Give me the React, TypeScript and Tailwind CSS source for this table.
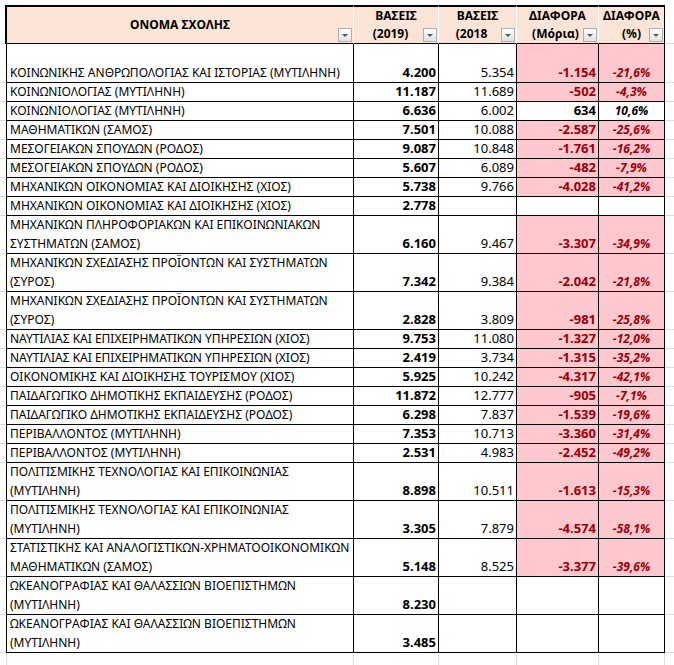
import React from "react";

type Row = {
  name: string[];
  h: "tall" | "one" | "two";
  b19: string;
  b18: string;
  diff: string;
  pct: string;
};

const rows: Row[] = [
  { name: ["ΚΟΙΝΩΝΙΚΗΣ ΑΝΘΡΩΠΟΛΟΓΙΑΣ ΚΑΙ ΙΣΤΟΡΙΑΣ (ΜΥΤΙΛΗΝΗ)"], h: "tall", b19: "4.200", b18: "5.354", diff: "-1.154", pct: "-21,6%" },
  { name: ["ΚΟΙΝΩΝΙΟΛΟΓΙΑΣ (ΜΥΤΙΛΗΝΗ)"], h: "one", b19: "11.187", b18: "11.689", diff: "-502", pct: "-4,3%" },
  { name: ["ΚΟΙΝΩΝΙΟΛΟΓΙΑΣ (ΜΥΤΙΛΗΝΗ)"], h: "one", b19: "6.636", b18: "6.002", diff: "634", pct: "10,6%" },
  { name: ["ΜΑΘΗΜΑΤΙΚΩΝ (ΣΑΜΟΣ)"], h: "one", b19: "7.501", b18: "10.088", diff: "-2.587", pct: "-25,6%" },
  { name: ["ΜΕΣΟΓΕΙΑΚΩΝ ΣΠΟΥΔΩΝ (ΡΟΔΟΣ)"], h: "one", b19: "9.087", b18: "10.848", diff: "-1.761", pct: "-16,2%" },
  { name: ["ΜΕΣΟΓΕΙΑΚΩΝ ΣΠΟΥΔΩΝ (ΡΟΔΟΣ)"], h: "one", b19: "5.607", b18: "6.089", diff: "-482", pct: "-7,9%" },
  { name: ["ΜΗΧΑΝΙΚΩΝ ΟΙΚΟΝΟΜΙΑΣ ΚΑΙ ΔΙΟΙΚΗΣΗΣ (ΧΙΟΣ)"], h: "one", b19: "5.738", b18: "9.766", diff: "-4.028", pct: "-41,2%" },
  { name: ["ΜΗΧΑΝΙΚΩΝ ΟΙΚΟΝΟΜΙΑΣ ΚΑΙ ΔΙΟΙΚΗΣΗΣ (ΧΙΟΣ)"], h: "one", b19: "2.778", b18: "", diff: "", pct: "" },
  { name: ["ΜΗΧΑΝΙΚΩΝ ΠΛΗΡΟΦΟΡΙΑΚΩΝ ΚΑΙ ΕΠΙΚΟΙΝΩΝΙΑΚΩΝ", "ΣΥΣΤΗΜΑΤΩΝ (ΣΑΜΟΣ)"], h: "two", b19: "6.160", b18: "9.467", diff: "-3.307", pct: "-34,9%" },
  { name: ["ΜΗΧΑΝΙΚΩΝ ΣΧΕΔΙΑΣΗΣ ΠΡΟΪΟΝΤΩΝ ΚΑΙ ΣΥΣΤΗΜΑΤΩΝ", "(ΣΥΡΟΣ)"], h: "two", b19: "7.342", b18: "9.384", diff: "-2.042", pct: "-21,8%" },
  { name: ["ΜΗΧΑΝΙΚΩΝ ΣΧΕΔΙΑΣΗΣ ΠΡΟΪΟΝΤΩΝ ΚΑΙ ΣΥΣΤΗΜΑΤΩΝ", "(ΣΥΡΟΣ)"], h: "two", b19: "2.828", b18: "3.809", diff: "-981", pct: "-25,8%" },
  { name: ["ΝΑΥΤΙΛΙΑΣ ΚΑΙ ΕΠΙΧΕΙΡΗΜΑΤΙΚΩΝ ΥΠΗΡΕΣΙΩΝ (ΧΙΟΣ)"], h: "one", b19: "9.753", b18: "11.080", diff: "-1.327", pct: "-12,0%" },
  { name: ["ΝΑΥΤΙΛΙΑΣ ΚΑΙ ΕΠΙΧΕΙΡΗΜΑΤΙΚΩΝ ΥΠΗΡΕΣΙΩΝ (ΧΙΟΣ)"], h: "one", b19: "2.419", b18: "3.734", diff: "-1.315", pct: "-35,2%" },
  { name: ["ΟΙΚΟΝΟΜΙΚΗΣ ΚΑΙ ΔΙΟΙΚΗΣΗΣ ΤΟΥΡΙΣΜΟΥ (ΧΙΟΣ)"], h: "one", b19: "5.925", b18: "10.242", diff: "-4.317", pct: "-42,1%" },
  { name: ["ΠΑΙΔΑΓΩΓΙΚΟ ΔΗΜΟΤΙΚΗΣ ΕΚΠΑΙΔΕΥΣΗΣ (ΡΟΔΟΣ)"], h: "one", b19: "11.872", b18: "12.777", diff: "-905", pct: "-7,1%" },
  { name: ["ΠΑΙΔΑΓΩΓΙΚΟ ΔΗΜΟΤΙΚΗΣ ΕΚΠΑΙΔΕΥΣΗΣ (ΡΟΔΟΣ)"], h: "one", b19: "6.298", b18: "7.837", diff: "-1.539", pct: "-19,6%" },
  { name: ["ΠΕΡΙΒΑΛΛΟΝΤΟΣ (ΜΥΤΙΛΗΝΗ)"], h: "one", b19: "7.353", b18: "10.713", diff: "-3.360", pct: "-31,4%" },
  { name: ["ΠΕΡΙΒΑΛΛΟΝΤΟΣ (ΜΥΤΙΛΗΝΗ)"], h: "one", b19: "2.531", b18: "4.983", diff: "-2.452", pct: "-49,2%" },
  { name: ["ΠΟΛΙΤΙΣΜΙΚΗΣ ΤΕΧΝΟΛΟΓΙΑΣ ΚΑΙ ΕΠΙΚΟΙΝΩΝΙΑΣ", "(ΜΥΤΙΛΗΝΗ)"], h: "two", b19: "8.898", b18: "10.511", diff: "-1.613", pct: "-15,3%" },
  { name: ["ΠΟΛΙΤΙΣΜΙΚΗΣ ΤΕΧΝΟΛΟΓΙΑΣ ΚΑΙ ΕΠΙΚΟΙΝΩΝΙΑΣ", "(ΜΥΤΙΛΗΝΗ)"], h: "two", b19: "3.305", b18: "7.879", diff: "-4.574", pct: "-58,1%" },
  { name: ["ΣΤΑΤΙΣΤΙΚΗΣ ΚΑΙ ΑΝΑΛΟΓΙΣΤΙΚΩΝ-ΧΡΗΜΑΤΟΟΙΚΟΝΟΜΙΚΩΝ", "ΜΑΘΗΜΑΤΙΚΩΝ (ΣΑΜΟΣ)"], h: "two", b19: "5.148", b18: "8.525", diff: "-3.377", pct: "-39,6%" },
  { name: ["ΩΚΕΑΝΟΓΡΑΦΙΑΣ ΚΑΙ ΘΑΛΑΣΣΙΩΝ ΒΙΟΕΠΙΣΤΗΜΩΝ", "(ΜΥΤΙΛΗΝΗ)"], h: "two", b19: "8.230", b18: "", diff: "", pct: "" },
  { name: ["ΩΚΕΑΝΟΓΡΑΦΙΑΣ ΚΑΙ ΘΑΛΑΣΣΙΩΝ ΒΙΟΕΠΙΣΤΗΜΩΝ", "(ΜΥΤΙΛΗΝΗ)"], h: "two", b19: "3.485", b18: "", diff: "", pct: "" },
];

const heights = { tall: "h-[39px]", one: "h-[19px]", two: "h-[38px]" };

const FilterButton = () => (
  <span className="absolute right-[1px] bottom-[1px] w-[14px] h-[14px] border border-[#b0b0b0] bg-linear-to-b from-white to-[#e2e2e2] flex items-center justify-center">
    <span className="w-0 h-0 border-l-[3px] border-r-[3px] border-t-[3px] border-l-transparent border-r-transparent border-t-[#5a5a5a]" />
  </span>
);

const HeaderCell = ({ top, bottom, w, pr, last }: { top: string; bottom: string; w: string; pr: string; last?: boolean }) => (
  <div
    className={`${w} shrink-0 relative bg-[#fce4d6] border-t-2 border-b border-black ${
      last ? "border-r border-r-black" : "border-r border-r-white"
    } flex flex-col items-center justify-end leading-[18px] font-bold`}
  >
    <span>{top}</span>
    <span className={pr}>{bottom}</span>
    <FilterButton />
  </div>
);

const DataRow = ({ r }: { r: Row }) => {
  const neg = r.diff.startsWith("-");
  const fill = neg ? "bg-[#ffc7ce] text-[#9c0006]" : "text-black";
  const cell = "shrink-0 border-r border-b border-black flex items-end leading-[19px]";
  return (
    <div className={`flex ${heights[r.h]}`}>
      <div className="w-[6px] shrink-0 border-b border-[#dcdcdc]" />
      <div className={`w-[348px] border-l pl-[3px] overflow-hidden whitespace-nowrap text-[12px] ${cell}`}>
        <div className="flex flex-col">
          {r.name.map((l, i) => (
            <span key={i}>{l}</span>
          ))}
        </div>
      </div>
      <div className={`w-[85px] justify-end pr-[2px] font-bold text-[13px] ${cell}`}>{r.b19}</div>
      <div className={`w-[78px] justify-end pr-[2px] text-[13px] ${cell}`}>{r.b18}</div>
      <div className={`w-[82px] justify-end pr-[2px] font-bold text-[13px] ${r.diff ? fill : ""} ${cell}`}>{r.diff}</div>
      <div className={`w-[66px] justify-center font-bold italic text-[12px] ${r.pct ? fill : ""} ${cell}`}>{r.pct}</div>
      <div className="flex-1 border-b border-[#dcdcdc]" />
    </div>
  );
};

export default function App() {
  return (
    <div className="w-[674px] h-[665px] overflow-hidden bg-white pt-[5px] text-[12px] text-black font-['Noto_Sans',sans-serif]">
      {/* header */}
      <div className="flex h-[39px] text-[12px]">
        <div className="w-[5px] shrink-0 border-b border-[#dcdcdc]" />
        <div className="w-[349px] shrink-0 relative bg-[#fce4d6] border-t-2 border-l-2 border-b border-black border-r border-r-white flex items-center justify-center font-bold">
          ΟΝΟΜΑ ΣΧΟΛΗΣ
          <FilterButton />
        </div>
        <HeaderCell w="w-[85px]" top="ΒΑΣΕΙΣ" bottom="(2019)" pr="pr-[11px]" />
        <HeaderCell w="w-[78px]" top="ΒΑΣΕΙΣ" bottom="(2018" pr="pr-[12px]" />
        <HeaderCell w="w-[82px]" top="ΔΙΑΦΟΡΑ" bottom="(Μόρια)" pr="pr-[4px]" />
        <HeaderCell w="w-[66px]" top="ΔΙΑΦΟΡΑ" bottom="(%)" pr="pr-0" last />
        <div className="flex-1 border-b border-[#dcdcdc]" />
      </div>
      {rows.map((r, i) => (
        <DataRow key={i} r={r} />
      ))}
      {/* empty sheet area below the table */}
      <div className="flex h-[20px]">
        <div className="w-[6px] shrink-0" />
        <div className="w-[348px] shrink-0 border-l border-r border-[#dcdcdc]" />
        <div className="w-[85px] shrink-0 border-r border-[#dcdcdc]" />
        <div className="w-[78px] shrink-0 border-r border-[#dcdcdc]" />
        <div className="w-[82px] shrink-0 border-r border-[#dcdcdc]" />
        <div className="w-[66px] shrink-0 border-r border-[#dcdcdc]" />
      </div>
    </div>
  );
}
